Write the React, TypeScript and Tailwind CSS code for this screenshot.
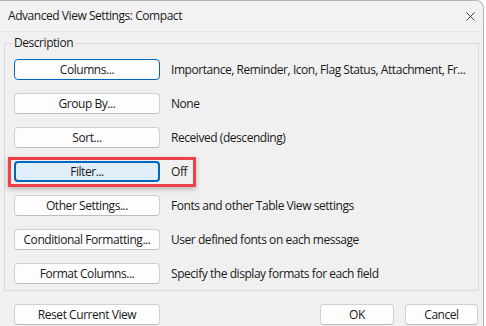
import { X } from "lucide-react";

// rows of the Description group
const rows = [
  { label: "Columns...", text: "Importance, Reminder, Icon, Flag Status, Attachment, Fr...", def: true },
  { label: "Group By...", text: "None" },
  { label: "Sort...", text: "Received (descending)" },
  { label: "Filter...", text: "Off", marked: true },
  { label: "Other Settings...", text: "Fonts and other Table View settings" },
  { label: "Conditional Formatting...", text: "User defined fonts on each message" },
  { label: "Format Columns...", text: "Specify the display formats for each field" },
];

function Btn({ children, className = "" }: { children: React.ReactNode; className?: string }) {
  return (
    <button
      className={
        "h-[21px] shrink-0 rounded-[4px] border text-[12px] leading-none text-[#1a1a1a] flex items-center justify-center " +
        className
      }
    >
      {children}
    </button>
  );
}

const plain = "bg-[#fdfdfd] border-[#d0d0d0] border-b-[#bcbcbc]";

export default function App() {
  return (
    <div
      className="w-[486px] h-[326px] bg-white overflow-hidden tracking-[-0.45px]"
      style={{ fontFamily: '"Segoe UI", "Open Sans", "Noto Sans", sans-serif' }}
    >
      <div className="w-[484px] h-[326px] bg-[#f0f0f0] border-r border-t border-[#b4b4b4] rounded-tr-[8px] flex flex-col">
        {/* title bar */}
        <div className="h-[31px] shrink-0 bg-[#f3f1f3] border-b border-[#e6e6e6] flex items-center justify-between pl-[8px] pr-[3px] rounded-tr-[8px]">
          <span className="text-[12px] text-[#1a1a1a]">Advanced View Settings: Compact</span>
          <X size={15} strokeWidth={1.3} className="text-[#1a1a1a] mr-[2px]" />
        </div>

        {/* Description group */}
        <div className="relative mt-[11px] ml-[4px] w-[475px] border border-[#d9d9d9] pt-[15px] pl-[9px] pb-[6px]">
          <span className="absolute top-[-9px] left-[7px] bg-[#f0f0f0] px-[2px] text-[12px] leading-[16px] text-[#1a1a1a]">
            Description
          </span>
          <div className="flex flex-col gap-[13px]">
            {rows.map((r) => (
              <div key={r.label} className="relative h-[21px] flex items-center gap-[11px]">
                {r.marked && (
                  <span className="absolute left-[-6px] top-[-4px] w-[188px] h-[30px] border-[3px] border-[#ef4146] shadow-[0_2px_5px_rgba(0,0,0,0.25)]" />
                )}
                <Btn
                  className={
                    "w-[146px] " +
                    (r.def
                      ? "bg-[#fdfdfd] border-[#0067c0]"
                      : r.marked
                        ? "bg-[#e0eef9] border-[#0067c0] border-2"
                        : plain)
                  }
                >
                  {r.label}
                </Btn>
                <span className="text-[12px] leading-none text-[#1a1a1a] whitespace-nowrap">{r.text}</span>
              </div>
            ))}
          </div>
        </div>

        {/* bottom buttons */}
        <div className="mt-[13px] pl-[14px] pr-[5px] flex items-center">
          <Btn className={"w-[146px] " + plain}>Reset Current View</Btn>
          <div className="ml-auto flex gap-[11px]">
            <Btn className={"w-[74px] " + plain}>OK</Btn>
            <Btn className={"w-[73px] " + plain}>Cancel</Btn>
          </div>
        </div>
      </div>
    </div>
  );
}
